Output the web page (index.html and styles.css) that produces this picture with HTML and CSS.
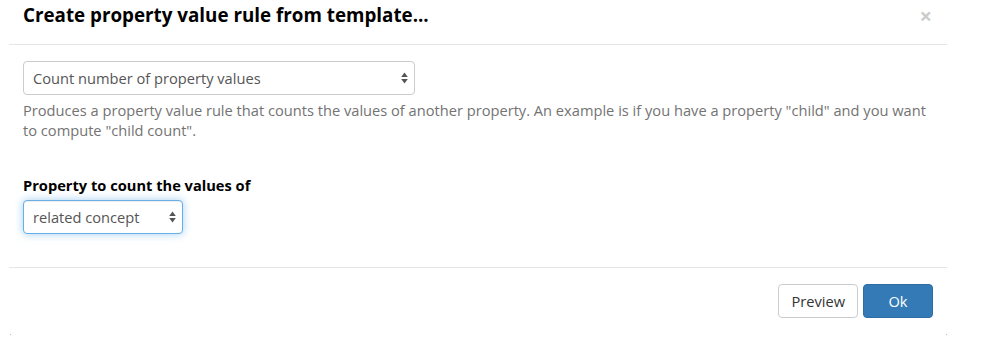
FILE: index.html
```html
<!DOCTYPE html>
<html>
<head>
<meta charset="utf-8">
<link rel="stylesheet" href="styles.css">
</head>
<body>
<div class="modal">
  <div class="modal-header">
    <h4 class="modal-title">Create property value rule from template...</h4>
    <span class="close">×</span>
  </div>
  <div class="modal-body">
    <div class="form-group first">
      <div class="select wide">
        <span>Count number of property values</span>
        <svg class="arrows" width="7" height="12" viewBox="0 0 7 12"><path d="M3.5 0.5 L6.8 5 L0.2 5 Z M3.5 11.5 L6.8 7 L0.2 7 Z" fill="#555"/></svg>
      </div>
      <p class="help-block">Produces a property value rule that counts the values of another property. An example is if you have a property "child" and you want to compute "child count".</p>
    </div>
    <div class="form-group second">
      <label class="label">Property to count the values of</label>
      <div class="select narrow focus">
        <span>related concept</span>
        <svg class="arrows" width="7" height="12" viewBox="0 0 7 12"><path d="M3.5 0.5 L6.8 5 L0.2 5 Z M3.5 11.5 L6.8 7 L0.2 7 Z" fill="#555"/></svg>
      </div>
    </div>
  </div>
  <div class="modal-footer">
    <button class="btn btn-default">Preview</button>
    <button class="btn btn-primary">Ok</button>
  </div>
  <div class="corners"><span class="dot"></span><span class="dot"></span></div>
</div>
</body>
</html>
```
FILE: styles.css
```css
html, body {
  margin: 0;
  padding: 0;
  background: #fff;
}
body {
  font-family: "Open Sans", "Liberation Sans", sans-serif;
  font-size: 14.65px;
  line-height: 20px;
  color: #333;
}
.modal {
  width: 938px;
  margin-left: 9px;
  background: #fff;
}
.modal-header {
  display: flex;
  justify-content: space-between;
  align-items: flex-start;
  height: 45px;
  box-sizing: border-box;
  padding: 5px 15px 0 14px;
  border-bottom: 1px solid #e5e5e5;
}
.modal-title {
  margin: 0;
  font-size: 18.8px;
  line-height: 20px;
  font-weight: 700;
  color: #000;
}
.close {
  font-size: 22px;
  font-weight: 700;
  line-height: 1;
  color: #000;
  opacity: 0.2;
  margin-top: -1px;
}
.modal-body {
  padding: 16px 14px 0 14px;
  height: 223px;
  box-sizing: border-box;
  border-bottom: 1px solid #e5e5e5;
}
.select {
  display: flex;
  align-items: center;
  justify-content: space-between;
  height: 34px;
  box-sizing: border-box;
  padding: 0 6px 0 9px;
  border: 1px solid #ccc;
  border-radius: 4px;
  color: #555;
  background: #fff;
}
.select.wide {
  width: 392px;
}
.select.narrow {
  width: 160px;
}
.select.focus {
  border-color: #66afe9;
  box-shadow: inset 0 1px 1px rgba(0,0,0,.075), 0 0 8px rgba(102,175,233,.6);
}
.arrows {
  display: block;
}
.help-block {
  margin: 5px 0 0 0;
  color: #737373;
}
.form-group.second {
  margin-top: 35px;
}
.label {
  display: block;
  font-weight: 700;
  color: #000;
  margin-bottom: 5px;
}
.modal-footer {
  display: flex;
  justify-content: flex-end;
  gap: 5px;
  padding: 16px 14px 0 14px;
  height: 66px;
  box-sizing: border-box;
}
.btn {
  font-family: inherit;
  font-size: 14.65px;
  line-height: 20px;
  height: 34px;
  padding: 6px 12px;
  border-radius: 4px;
  border: 1px solid #ccc;
  box-sizing: border-box;
  margin: 0;
}
.btn-default {
  background: #fff;
  color: #333;
}
.btn-primary {
  background: #337ab7;
  border-color: #2e6da4;
  color: #fff;
  width: 70px;
}
.corners {
  display: flex;
  justify-content: space-between;
  padding: 0 0 0 1px;
}
.dot {
  width: 1px;
  height: 1px;
  background: #bbb;
}
```
